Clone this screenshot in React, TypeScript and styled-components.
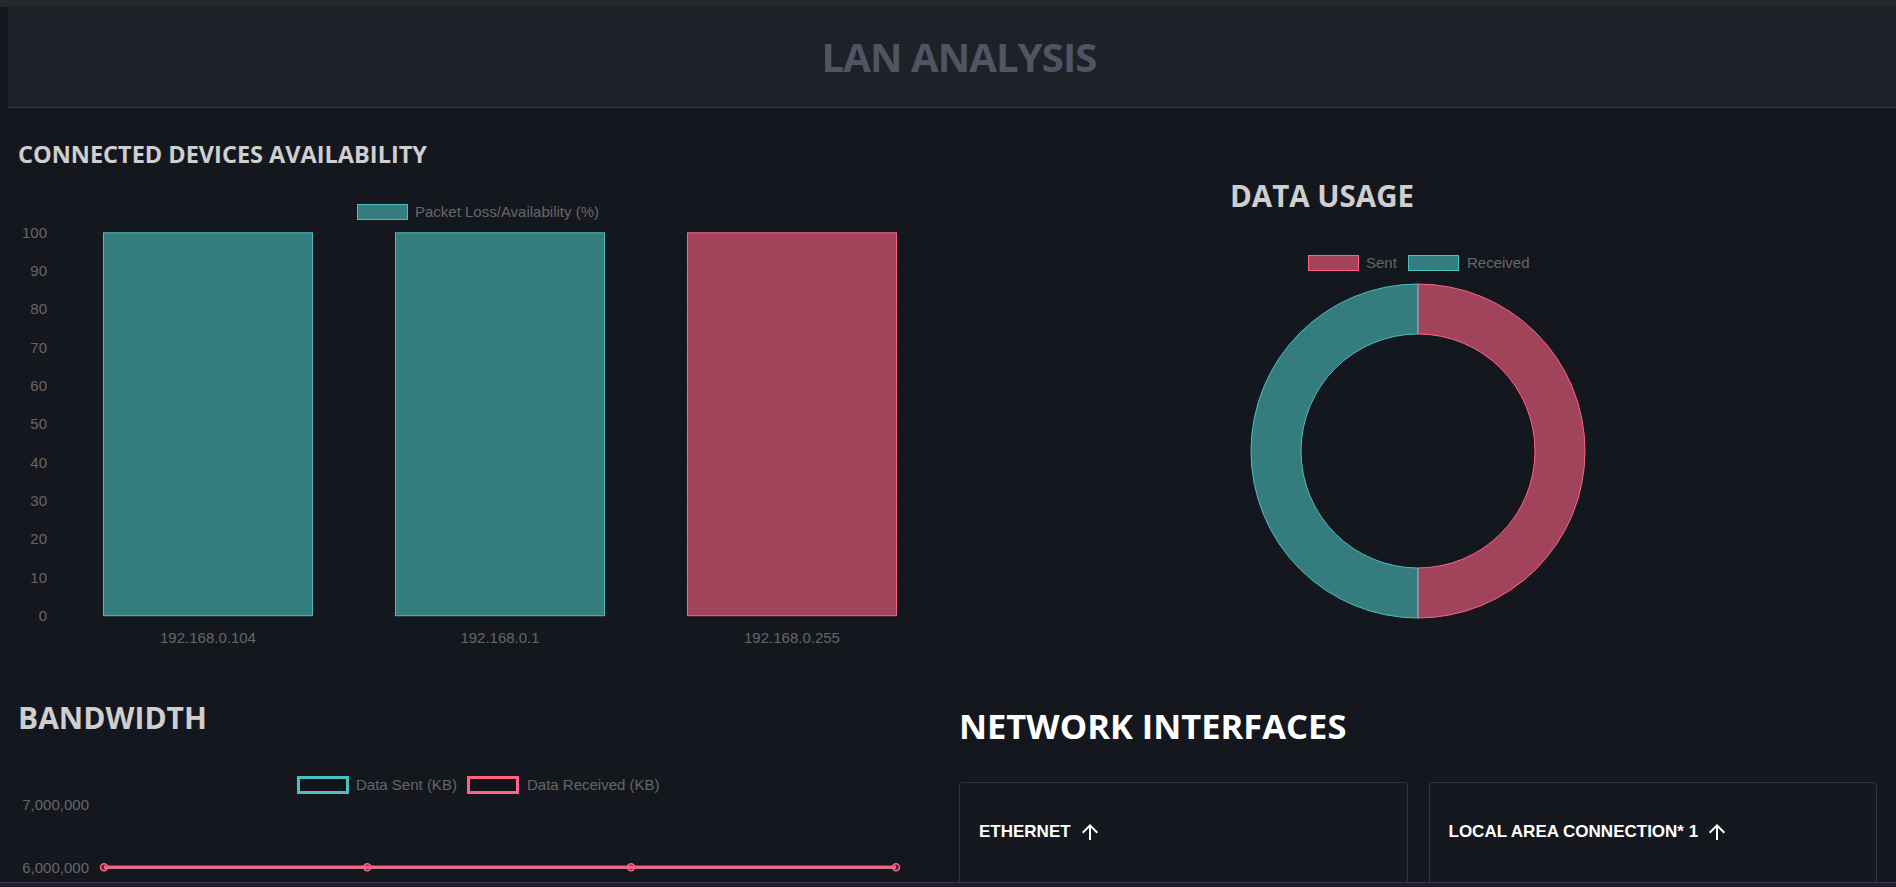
import React from "react";
import styled, { createGlobalStyle } from "styled-components";
import { MdArrowUpward } from "react-icons/md";

const GlobalStyle = createGlobalStyle`
  html, body {
    margin: 0;
    padding: 0;
    background: #15171f;
    overflow: hidden;
    font-family: "Open Sans", "Noto Sans", sans-serif;
  }
  * { box-sizing: border-box; }
`;

const TEAL = "#4bc0c0";
const TEAL_FILL = "rgba(75, 192, 192, 0.6)";
const PINK = "#ff6384";
const PINK_FILL = "rgba(255, 99, 132, 0.6)";

const Page = styled.div`
  min-height: 100vh;
  background: #15171f;
`;

const TopStrip = styled.div`
  height: 7px;
  background: #25282d;
`;

const Header = styled.header`
  margin-left: 8px;
  padding-left: 14px;
  height: 101px;
  background: #1f2129;
  border-bottom: 1px solid #383b43;
  display: flex;
  align-items: center;
  justify-content: center;
`;

const Title = styled.h1`
  margin: 0;
  font-size: 40px;
  line-height: 48px;
  font-weight: 700;
  color: #4f5562;
  letter-spacing: -0.9px;
`;

const Dashboard = styled.main`
  display: grid;
  grid-template-columns: 940px 1fr;
  grid-template-rows: 572px auto;
`;

const Cell = styled.section<{ $pt: number; $pl?: number; $pr?: number }>`
  padding-top: ${(p) => p.$pt}px;
  padding-left: ${(p) => p.$pl ?? 0}px;
  padding-right: ${(p) => p.$pr ?? 0}px;
  min-width: 0;
`;

const SectionTitle = styled.h2<{ $size: number; $lh: number; $color?: string; $indent?: number }>`
  margin: 0 0 0 ${(p) => p.$indent ?? 0}px;
  font-size: ${(p) => p.$size}px;
  line-height: ${(p) => p.$lh}px;
  font-weight: 700;
  color: ${(p) => p.$color ?? "#cfcfcf"};
  white-space: nowrap;
`;

const ChartSvg = styled.svg<{ $mt?: number }>`
  display: block;
  margin-top: ${(p) => p.$mt ?? 0}px;
  overflow: visible;
`;

const ChartText = styled.text`
  font-family: "Liberation Sans", Arial, sans-serif;
  font-size: 15px;
  fill: #666666;
`;

const DonutPanel = styled.div`
  width: 376px;
  margin: 0 auto;
`;

const CardGrid = styled.div`
  display: grid;
  grid-template-columns: 1fr 1fr;
  gap: 21px;
  margin-top: 35px;
`;

const Card = styled.article`
  height: 260px;
  border: 1px solid #32353d;
  border-radius: 4px;
  padding: 37px 20px 0 19px;
  background: #161820;
`;

const CardTitle = styled.h3`
  margin: 0;
  display: flex;
  align-items: center;
  gap: 7px;
  height: 24px;
  font-family: "Liberation Sans", Arial, sans-serif;
  font-size: 17px;
  font-weight: 700;
  color: #ffffff;
  white-space: nowrap;
`;

const BottomBar = styled.div`
  position: fixed;
  left: 0;
  right: 0;
  bottom: 0;
  height: 5px;
  background: #1e1b2c;
  border-top: 1px solid #3b3750;
`;

/* ---------- Connected devices bar chart ---------- */

const devices = [
  { ip: "192.168.0.104", value: 100, fill: TEAL_FILL, stroke: TEAL },
  { ip: "192.168.0.1", value: 100, fill: TEAL_FILL, stroke: TEAL },
  { ip: "192.168.0.255", value: 100, fill: PINK_FILL, stroke: PINK },
];

const GRID = "rgba(255,255,255,0.028)";

function DevicesChart() {
  const left = 62;
  const right = 938;
  const top = 52.3;
  const bottom = 435.7;
  const cat = (right - left) / devices.length;
  const barW = 210;
  const yFor = (v: number) => bottom - (v / 100) * (bottom - top);
  const ticks = [100, 90, 80, 70, 60, 50, 40, 30, 20, 10, 0];
  return (
    <ChartSvg width={940} height={480} $mt={11}>
      <rect x={357.5} y={24.5} width={50} height={15} fill={TEAL_FILL} stroke={TEAL} strokeWidth={1} />
      <ChartText x={415} y={37.2}>Packet Loss/Availability (%)</ChartText>
      {ticks.map((t) => (
        <g key={t}>
          <line x1={52} x2={right} y1={yFor(t)} y2={yFor(t)} stroke={GRID} strokeWidth={1} />
          <ChartText x={47} y={yFor(t) + 5.2} textAnchor="end">
            {t}
          </ChartText>
        </g>
      ))}
      {[0, 1, 2, 3].map((i) => (
        <line key={i} x1={left + i * cat} x2={left + i * cat} y1={top} y2={bottom + 10} stroke={GRID} strokeWidth={1} />
      ))}
      {devices.map((d, i) => {
        const x = left + i * cat + (cat - barW) / 2;
        const y = yFor(d.value);
        return (
          <g key={d.ip}>
            <rect x={x + 0.5} y={y + 0.5} width={barW - 1} height={bottom - y - 0.5} fill={d.fill} stroke={d.stroke} strokeWidth={1} />
            <ChartText x={left + i * cat + cat / 2} y={462.9} textAnchor="middle">
              {d.ip}
            </ChartText>
          </g>
        );
      })}
    </ChartSvg>
  );
}

/* ---------- Data usage doughnut ---------- */

function DonutChart() {
  const cx = 478;
  const cy = 237;
  const R = 167;
  const r = 117;
  const right = `M ${cx} ${cy - R} A ${R} ${R} 0 0 1 ${cx} ${cy + R} L ${cx} ${cy + r} A ${r} ${r} 0 0 0 ${cx} ${cy - r} Z`;
  const leftHalf = `M ${cx} ${cy + R} A ${R} ${R} 0 0 1 ${cx} ${cy - R} L ${cx} ${cy - r} A ${r} ${r} 0 0 0 ${cx} ${cy + r} Z`;
  return (
    <ChartSvg width={956} height={426}>
      <rect x={368.5} y={41.5} width={50} height={15} fill={PINK_FILL} stroke={PINK} strokeWidth={1} />
      <ChartText x={426} y={54.2}>Sent</ChartText>
      <rect x={468.5} y={41.5} width={50} height={15} fill={TEAL_FILL} stroke={TEAL} strokeWidth={1} />
      <ChartText x={527} y={54.2}>Received</ChartText>
      <path d={right} fill={PINK_FILL} stroke={PINK} strokeWidth={1} />
      <path d={leftHalf} fill={TEAL_FILL} stroke={TEAL} strokeWidth={1} />
    </ChartSvg>
  );
}

/* ---------- Bandwidth line chart ---------- */

const bandwidthX = [104, 367.3, 631, 896];

function BandwidthChart() {
  const lineY = 131.3;
  const pts = bandwidthX.map((x) => `${x},${lineY}`).join(" ");
  return (
    <ChartSvg width={940} height={300}>
      <rect x={298.5} y={41.5} width={49} height={15} fill="rgba(0,0,0,0.1)" stroke={TEAL} strokeWidth={3} />
      <ChartText x={356} y={54.2}>Data Sent (KB)</ChartText>
      <rect x={468.5} y={41.5} width={49} height={15} fill="rgba(0,0,0,0.1)" stroke={PINK} strokeWidth={3} />
      <ChartText x={527} y={54.2}>Data Received (KB)</ChartText>

      <line x1={94} x2={896} y1={68} y2={68} stroke={GRID} strokeWidth={1} />
      <line x1={94} x2={896} y1={lineY} y2={lineY} stroke={GRID} strokeWidth={1} />
      {bandwidthX.map((x) => (
        <line key={x} x1={x} x2={x} y1={68} y2={300} stroke={GRID} strokeWidth={1} />
      ))}
      <ChartText x={89} y={73.5} textAnchor="end">7,000,000</ChartText>
      <ChartText x={89} y={136.9} textAnchor="end">6,000,000</ChartText>

      <polyline points={pts} fill="none" stroke={TEAL} strokeWidth={3} />
      <polyline points={pts} fill="none" stroke={PINK} strokeWidth={3} />
      {bandwidthX.map((x) => (
        <circle key={x} cx={x} cy={lineY} r={3.5} fill="rgba(255,99,132,0.25)" stroke={PINK} strokeWidth={1.5} />
      ))}
    </ChartSvg>
  );
}

const interfaces = ["ETHERNET", "LOCAL AREA CONNECTION* 1"];

export default function App() {
  return (
    <Page>
      <GlobalStyle />
      <TopStrip />
      <Header>
        <Title>LAN ANALYSIS</Title>
      </Header>
      <Dashboard>
        <Cell $pt={32}>
          <SectionTitle $size={23.5} $lh={29} $indent={18}>
            CONNECTED DEVICES AVAILABILITY
          </SectionTitle>
          <DevicesChart />
        </Cell>
        <Cell $pt={70}>
          <DonutPanel>
            <SectionTitle $size={29.5} $lh={36}>DATA USAGE</SectionTitle>
          </DonutPanel>
          <DonutChart />
        </Cell>
        <Cell $pt={20}>
          <SectionTitle $size={30} $lh={36} $indent={18}>
            BANDWIDTH
          </SectionTitle>
          <BandwidthChart />
        </Cell>
        <Cell $pt={25} $pl={19} $pr={19}>
          <SectionTitle $size={34.5} $lh={42} $color="#ffffff">
            NETWORK INTERFACES
          </SectionTitle>
          <CardGrid>
            {interfaces.map((name) => (
              <Card key={name}>
                <CardTitle>
                  {name}
                  <MdArrowUpward size={24} />
                </CardTitle>
              </Card>
            ))}
          </CardGrid>
        </Cell>
      </Dashboard>
      <BottomBar />
    </Page>
  );
}
